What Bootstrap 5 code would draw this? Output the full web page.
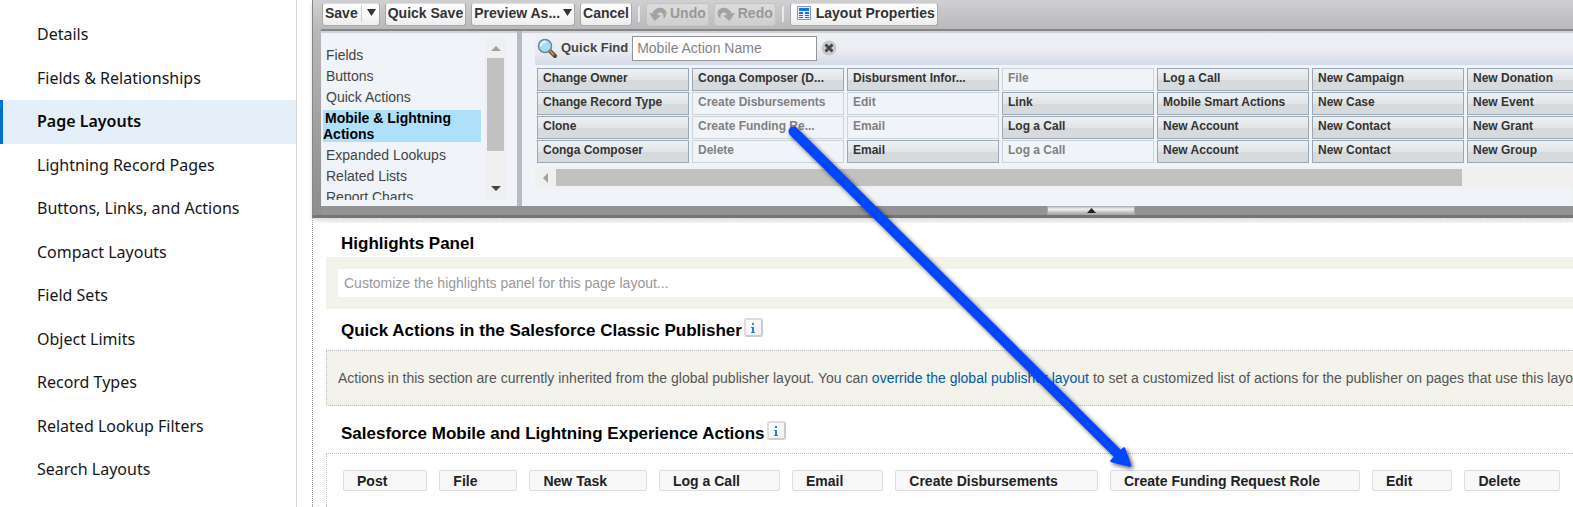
<!DOCTYPE html>
<html lang="en">
<head>
<meta charset="utf-8">
<meta name="viewport" content="width=device-width, initial-scale=1">
<title>Page Layouts</title>
<link href="https://cdn.jsdelivr.net/npm/bootstrap@5.3.0/dist/css/bootstrap.min.css" rel="stylesheet">
<style>
  body { font: 14px/16px "Liberation Sans", Arial, sans-serif; color: #444; background: #fff; overflow-x: hidden; }

  /* setup navigation */
  .setup-nav { width: 297px; padding-top: 13px; border-right: 1px solid #d8d8d8; font-family: "Noto Sans", sans-serif; }
  .setup-nav .nav-link { padding: 12px 34px; border-left: 3px solid transparent; border-radius: 0; font-size: 16px; line-height: 1.22; color: #16161a; white-space: nowrap; }
  .setup-nav .nav-link.active { background: #e5effa; border-left-color: #0070d2; color: #080707; font-weight: 600; }

  .editor { margin-left: 15px; min-width: 0; border-left: 1px dotted #888; }

  /* palette frame */
  .palette { margin-left: -1px; padding-left: 8px; background: linear-gradient(#d2d2d2, #b9b9bc 28px, #8f8f8f 92%); border-left: 1px solid #8c8484; border-bottom: 3px solid #757575; box-shadow: 0 3px 4px #ddd; }
  .tool-row { height: 29px; padding: 3px 1px 0; gap: 5px; background: linear-gradient(#d0d0d2, #b9b9bb); }
  .tool { display: flex; align-items: center; gap: 3px; height: 23px; padding: 0 2px 3px; border: 1px solid #aaa; border-top-color: #ddd; border-radius: 3px; background: linear-gradient(#fff, #fafafa 50%, #ececec); color: #333; font-weight: 700; line-height: 16px; white-space: nowrap; }
  .tool:disabled { background: linear-gradient(#dcdcdc, #cfcfcf); border-color: #c4c4c4; color: #999; }
  .tool .split { width: 1px; height: 17px; background: #ccd; }
  .tool-sep { width: 2px; height: 16px; background: #e8e8e8; margin: 3px 1px; }
  .panes { height: 177px; border-top: 2px solid #858585; background: #f0f4f8; box-shadow: inset 0 2px 1px #cdd0d4; }

  .category-pane { width: 201px; border-right: 5px solid #b9bac0; padding: 6px 11px 6px 2px; }
  .category-list { width: 158px; padding-top: 8px; overflow: hidden; }
  .category-list a { display: block; padding: 2px 0 3px 3px; color: #444; text-decoration: none; white-space: nowrap; }
  .category-list a.chosen { padding: 0; text-indent: 2px; margin-top: 2px; margin-bottom: 3px; background: #aee0fa; color: #000; font-weight: 700; white-space: normal; }
  .scroll-y { width: 21px; background: #f0f0f0; }
  .scroll-y .thumb { width: 17px; height: 93px; margin-bottom: 34px; background: #c1c1c1; }

  .item-pane { min-width: 0; padding: 3px 0 0 13px; }
  .find-row { height: 31px; gap: 4px; padding: 0 2px 3px; background: linear-gradient(#eff0f4, #ecedf3 50%, #d3dae8); font-size: 13px; font-weight: 700; }
  .find-row input { width: 185px; height: 25px; padding: 0 4px; border: 1px solid #959595; font-size: 14px; background: #fff; }
  .find-row input::placeholder { color: #848484; opacity: 1; }
  .icon-btn { display: flex; padding: 0; border: 0; background: none; }
  .item-grid { display: grid; grid-template-columns: repeat(7, 152px); grid-auto-flow: column; grid-template-rows: repeat(4, 23px); gap: 1px 3px; padding: 3px 0 4px 2px; overflow: hidden; }
  .item-grid button { padding: 0 5px 3px; border: 1px solid #99a8b4; background: linear-gradient(#eef1f3, #e2e5e7 50%, #d6d9db 54%, #d8dbdd); color: #333; font-size: 12px; font-weight: 700; line-height: 16px; text-align: left; white-space: nowrap; overflow: hidden; }
  .item-grid button:disabled { background: #f0f4f8; border-color: #ccd4da; color: #808080; }
  .scroll-x { height: 21px; gap: 8px; padding-left: 8px; background: #f0f0f0; }
  .scroll-x .thumb { width: 88%; height: 17px; background: #c1c1c1; }
  .frame-foot { height: 9px; padding-left: 58%; background: #939393; }
  .grip { width: 88px; height: 9px; padding: 0; display: flex; justify-content: center; align-items: center; border: 1px solid #aaa; border-top: 0; background: linear-gradient(#aaa, #f0f0f0 40%, #aaa); }

  /* layout sections */
  .sections { padding-left: 13px; padding-top: 3px; }
  .sections h2 { display: flex; align-items: center; gap: 2px; margin: 0; padding: 9px 0 6px 15px; color: #000; font-size: 17px; line-height: 20px; font-weight: 700; white-space: nowrap; }
  .highlights h2 { padding-top: 12px; padding-bottom: 3px; }
  .mobile-actions { padding-top: 6px; }
  .edge-line { border-top: 1px dashed #e4e4e4; }
  .band { background: #f3f2eb; padding: 12px 0 12px 12px; }
  .drop-hint { background: #fff; color: #999; padding: 6px; }
  .inherit-note { height: 56px; padding: 19px 11px; background: #f3f2eb; border: 1px dotted #bbb; border-right: 0; white-space: nowrap; overflow: hidden; color: #555; }
  .inherit-note a { color: #015ba7; text-decoration: none; }
  .action-box { border: 1px dotted #bbb; border-width: 1px 0 0 1px; padding: 16px; gap: 12px; overflow: hidden; }
  .action-box button { height: 21px; padding: 0 39px 0 13px; border: 1px solid #ddd; border-radius: 2px; background: #f8f8f8; color: #222; font-weight: 700; line-height: 16px; white-space: nowrap; flex: none; }
  .info { width: 19px; height: 19px; margin-bottom: 7px; justify-content: center; align-items: center; border: 2px solid #ccc; border-top-color: #ddd; border-left-color: #ddd; border-radius: 3px; background: linear-gradient(135deg, #fff, #eef0f6); }

  .pointer-arrow { left: 780px; top: 118px; pointer-events: none; filter: drop-shadow(2px 2px 2px rgba(0,0,0,.65)); }
</style>
</head>
<body>
<div class="d-flex min-vh-100 position-relative overflow-hidden">
  <nav class="setup-nav nav flex-column flex-nowrap flex-shrink-0" aria-label="Object setup">
    <a class="nav-link" href="#">Details</a>
    <a class="nav-link" href="#">Fields &amp; Relationships</a>
    <a class="nav-link active" href="#" aria-current="page">Page Layouts</a>
    <a class="nav-link" href="#">Lightning Record Pages</a>
    <a class="nav-link" href="#">Buttons, Links, and Actions</a>
    <a class="nav-link" href="#">Compact Layouts</a>
    <a class="nav-link" href="#">Field Sets</a>
    <a class="nav-link" href="#">Object Limits</a>
    <a class="nav-link" href="#">Record Types</a>
    <a class="nav-link" href="#">Related Lookup Filters</a>
    <a class="nav-link" href="#">Search Layouts</a>
  </nav>

  <main class="editor flex-grow-1 d-flex flex-column">
    <div class="palette">
      <div class="tool-row d-flex" role="toolbar" aria-label="Layout actions">
        <button class="tool" type="button">Save<span class="split"></span><svg width="12" height="8"><path d="M2 0h9l-4.500 7z" fill="#333"/></svg></button>
        <button class="tool" type="button">Quick Save</button>
        <button class="tool" type="button">Preview As...<svg width="9" height="8"><path d="M0 0h9l-4.500 7z" fill="#333"/></svg></button>
        <button class="tool" type="button">Cancel</button>
        <span class="tool-sep"></span>
        <button class="tool" type="button" disabled><svg width="18" height="15" viewBox="0 0 18 15"><path d="M0 7l3.500.5C4.500 2 13.500-1 17 5c1 3 0 6-3 8 1.500-3 0-7-3.500-6.500-1.500.3-2 1.500-2 2.500L12 9.500 5.500 15z" fill="#a3a3a3"/></svg>Undo</button>
        <button class="tool" type="button" disabled><svg width="18" height="15" viewBox="0 0 18 15"><path d="M18 7l-3.500.5C13.500 2 4.500-1 1 5c-1 3 0 6 3 8-1.500-3 0-7 3.500-6.500 1.500.3 2 1.500 2 2.500L6 9.500 12.500 15z" fill="#a3a3a3"/></svg>Redo</button>
        <span class="tool-sep"></span>
        <button class="tool" type="button"><svg class="ms-1" width="16" height="14" viewBox="0 0 16 14"><path fill="#e9eff8" stroke="#7f99b8" d="M.5.5h13v13H.5z"/><path fill="#1672de" d="M2 2h10v3H2zM2 6h4v2H2zM8 6h4v2H8zM2 9h4v1H2zM8 9h4v1H8zM2 11h4v1H2zM8 11h4v1H8z"/></svg>Layout Properties</button>
      </div>

      <div class="panes d-flex">
        <div class="category-pane d-flex justify-content-between flex-shrink-0">
          <nav class="category-list" aria-label="Palette categories">
            <a href="#">Fields</a>
            <a href="#">Buttons</a>
            <a href="#">Quick Actions</a>
            <a class="chosen" href="#">Mobile &amp; Lightning Actions</a>
            <a href="#">Expanded Lookups</a>
            <a href="#">Related Lists</a>
            <a href="#">Report Charts</a>
          </nav>
          <div class="scroll-y d-flex flex-column align-items-center justify-content-between" aria-hidden="true">
            <svg class="flex-shrink-0" width="10" height="21"><path d="M0 14l5-5 5 5z" fill="#a0a0a0"/></svg>
            <div class="thumb"></div>
            <svg class="flex-shrink-0" width="10" height="15"><path d="M0 1h10l-5 5z" fill="#444"/></svg>
          </div>
        </div>

        <div class="item-pane flex-grow-1">
          <div class="find-row d-flex align-items-center">
            <svg width="20" height="22" viewBox="0 0 20 22"><path d="M13 14l5 5" stroke="#53463d" stroke-width="4" stroke-linecap="round"/><path d="M13 14l4 4" stroke="#c98a46" stroke-width="2"/><circle cx="8" cy="9" r="6.500" fill="#a9dcf4" stroke="#6b8698" stroke-width="1.500"/><path d="M4 9a4 4 0 0 1 5-4" fill="none" stroke="#e8f8ff" stroke-width="2"/></svg>
            <label for="quick-find">Quick Find</label>
            <input id="quick-find" type="text" placeholder="Mobile Action Name">
            <button class="icon-btn" type="button" aria-label="Clear"><svg width="16" height="16" viewBox="0 0 16 16"><circle cx="8" cy="8" r="7.500" fill="#c8c9cc"/><path d="M4.500 4.500l7 7M11.500 4.500l-7 7" stroke="#444" stroke-width="2.800"/></svg></button>
          </div>
          <div class="item-grid">
            <button type="button">Change Owner</button>
            <button type="button">Change Record Type</button>
            <button type="button">Clone</button>
            <button type="button">Conga Composer</button>
            <button type="button">Conga Composer (D...</button>
            <button type="button" disabled>Create Disbursements</button>
            <button type="button" disabled>Create Funding Re...</button>
            <button type="button" disabled>Delete</button>
            <button type="button">Disbursment Infor...</button>
            <button type="button" disabled>Edit</button>
            <button type="button" disabled>Email</button>
            <button type="button">Email</button>
            <button type="button" disabled>File</button>
            <button type="button">Link</button>
            <button type="button">Log a Call</button>
            <button type="button" disabled>Log a Call</button>
            <button type="button">Log a Call</button>
            <button type="button">Mobile Smart Actions</button>
            <button type="button">New Account</button>
            <button type="button">New Account</button>
            <button type="button">New Campaign</button>
            <button type="button">New Case</button>
            <button type="button">New Contact</button>
            <button type="button">New Contact</button>
            <button type="button">New Donation</button>
            <button type="button">New Event</button>
            <button type="button">New Grant</button>
            <button type="button">New Group</button>
          </div>
          <div class="scroll-x d-flex align-items-center" aria-hidden="true">
            <svg width="5" height="10"><path d="M5 0v10L0 5z" fill="#a0a0a0"/></svg>
            <div class="thumb"></div>
          </div>
        </div>
      </div>
      <div class="frame-foot"><button class="grip" type="button" aria-label="Collapse palette"><svg width="9" height="5"><path d="M0 5h9L4.500 0z" fill="#222"/></svg></button></div>
    </div>

    <div class="sections flex-grow-1 d-flex flex-column">
      <div class="edge-line"></div>
      <section class="highlights">
        <h2>Highlights Panel</h2>
        <div class="band"><div class="drop-hint">Customize the highlights panel for this page layout...</div></div>
      </section>
      <section>
        <h2>Quick Actions in the Salesforce Classic Publisher
          <button class="icon-btn info" type="button" aria-label="About classic actions"><svg width="6" height="10"><path d="M2 0h2v2H2zM1 4h3v5h1v1H1V9h1V5H1z" fill="#2b7fe0"/></svg></button></h2>
        <div class="inherit-note">Actions in this section are currently inherited from the global publisher layout. You can <a href="#">override the global publisher layout</a> to set a customized list of actions for the publisher on pages that use this layout.</div>
      </section>
      <section class="mobile-actions flex-grow-1 d-flex flex-column">
        <h2>Salesforce Mobile and Lightning Experience Actions
          <button class="icon-btn info" type="button" aria-label="About mobile actions"><svg width="6" height="10"><path d="M2 0h2v2H2zM1 4h3v5h1v1H1V9h1V5H1z" fill="#2b7fe0"/></svg></button></h2>
        <div class="action-box flex-grow-1 d-flex align-items-start">
          <button type="button">Post</button>
          <button type="button">File</button>
          <button type="button">New Task</button>
          <button type="button">Log a Call</button>
          <button type="button">Email</button>
          <button type="button">Create Disbursements</button>
          <button type="button">Create Funding Request Role</button>
          <button type="button">Edit</button>
          <button type="button">Delete</button>
        </div>
      </section>
    </div>
  </main>

  <!-- annotation: drag the action from the palette to the layout -->
  <svg class="pointer-arrow position-absolute" width="365" height="360" viewBox="780 118 365 360" aria-hidden="true">
    <path d="M793.500 131.500L1118 454" stroke="#0047ff" stroke-width="10" stroke-linecap="round"/>
    <path d="M1124 448.500L1130 465.500 1111.500 461z" fill="#0047ff" stroke="#0047ff" stroke-width="2.500" stroke-linejoin="round"/>
  </svg>
</div>
<script src="https://cdn.jsdelivr.net/npm/bootstrap@5.3.0/dist/js/bootstrap.bundle.min.js"></script>
</body>
</html>
